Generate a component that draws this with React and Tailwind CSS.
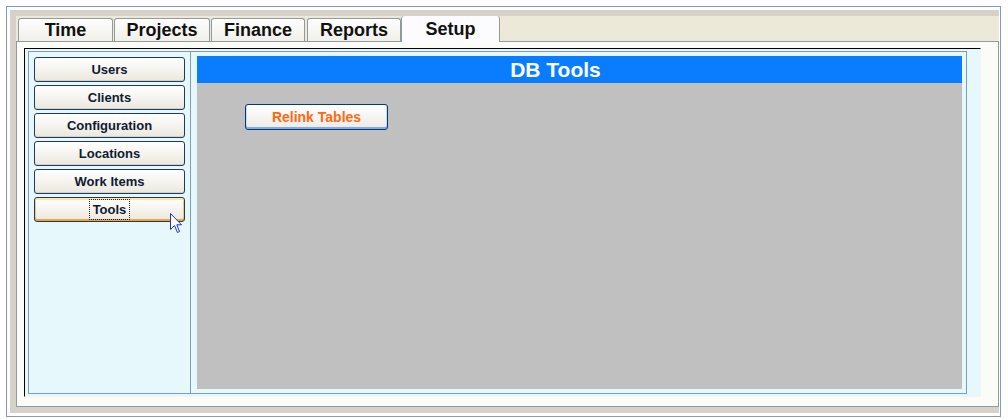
import React from 'react';

const font = { fontFamily: '"Liberation Sans", Arial, sans-serif' };

const tabs = [
  { label: 'Time', width: 'w-[95px]', margin: 'ml-[2px]' },
  { label: 'Projects', width: 'w-[96px]', margin: 'ml-[1px]' },
  { label: 'Finance', width: 'w-[94px]', margin: 'ml-[1px]' },
  { label: 'Reports', width: 'w-[94px]', margin: 'ml-[2px]' },
];

const menu = ['Users', 'Clients', 'Configuration', 'Locations', 'Work Items'];

const Cursor = () => (
  <svg
    className="absolute left-[141px] top-[161px]"
    width="13"
    height="21"
    viewBox="0 0 13 21"
  >
    <path
      d="M0.5 0.5 L0.5 16.5 L4.5 12.5 L7.5 19.5 L9.5 18.5 L6.8 11.8 L11.5 11.8 Z"
      fill="#ffffff"
      stroke="#1c2fd0"
      strokeWidth="1"
    />
  </svg>
);

const SideButton = ({ label }) => (
  <button className="h-[25px] w-[151px] rounded-[3px] border border-[#1b3b6a] bg-gradient-to-b from-[#ffffff] to-[#ebe8dd] text-[13px] font-bold text-[#0f1a33] shadow-[inset_0_-1px_0_#d6d2c4]">
    {label}
  </button>
);

export default function App() {
  return (
    <div className="h-[419px] w-[1008px] bg-white pl-[6px] pt-[6px]" style={font}>
      {/* outer frame */}
      <div className="h-[411px] w-[995px] border border-[#8596c8] pl-[3px] pt-[3px]">
        <div className="h-[403px] w-[989px] bg-[#d6d1c9] pl-[6px] pt-[6px]">
          {/* tab strip */}
          <div className="flex h-[25px] w-[983px] items-end bg-[#ece9d8]">
            {tabs.map((tab) => (
              <div
                key={tab.label}
                className={`${tab.width} ${tab.margin} flex h-[23px] items-center justify-center rounded-t-[3px] border border-b-0 border-[#919b9c] bg-gradient-to-b from-[#fefefe] to-[#f0efe8] text-[18px] font-bold text-[#111]`}
              >
                {tab.label}
              </div>
            ))}
            <div className="relative z-10 mb-[-1px] flex h-[26px] w-[99px] flex-col rounded-t-[3px] border-x border-[#919b9c] bg-[#fcfcfe]">
              <div className="h-[1px] bg-[#e68b2c]" />
              <div className="h-[2px] bg-[#ffc83c]" />
              <div className="flex flex-1 items-center justify-center pb-[3px] text-[18px] font-bold text-[#111]">
                Setup
              </div>
            </div>
          </div>

          {/* tab panel */}
          <div className="h-[366px] w-[983px] border border-[#919b9c] bg-[#fbfbf8] pl-[7px] pt-[6px]">
            <div className="h-[349px] w-[957px] border border-l-black border-t-black border-b-[#f3f3ef] border-r-[#f3f3ef] bg-[#e6f8fc] pl-[3px] pt-[2px]">
              <div className="flex h-[343px] w-[939px] border border-[#7f9db9]">
                {/* sidebar */}
                <div className="relative flex w-[162px] flex-col gap-[3px] border-r border-[#7f9db9] pl-[5px] pt-[5px]">
                  {menu.map((m) => (
                    <SideButton key={m} label={m} />
                  ))}
                  <button className="h-[25px] w-[151px] rounded-[3px] border border-[#1b3b6a] bg-gradient-to-b from-[#ffffff] to-[#ebe8dd] text-[13px] font-bold text-[#0f1a33] shadow-[inset_0_-2px_0_#eda536,inset_0_2px_0_#ffe7a8,inset_1px_0_0_#f7c86a,inset_-1px_0_0_#f7c86a]">
                    <span className="px-[3px] py-[2px] outline-1 outline-dotted outline-[#222]">
                      Tools
                    </span>
                  </button>
                  <Cursor />
                </div>

                {/* main area */}
                <div className="flex flex-1 flex-col pb-[4px] pl-[6px] pr-[4px] pt-[4px]">
                  <div className="flex h-[27px] items-center justify-center bg-[#0a7dff] pr-[48px] text-[21px] font-bold text-white">
                    DB Tools
                  </div>
                  <div className="flex-1 bg-[#c0c0c0] pl-[48px] pt-[21px]">
                    <button className="h-[26px] w-[143px] rounded-[3px] border border-[#003c74] bg-gradient-to-b from-[#ffffff] to-[#ecebe6] text-[14px] font-bold text-[#ff6a10] shadow-[inset_0_-2px_0_#86a8e4,inset_1px_0_0_#c7d9f6,inset_-1px_0_0_#c7d9f6]">
                      Relink Tables
                    </button>
                  </div>
                </div>
              </div>
            </div>
          </div>
        </div>
      </div>
    </div>
  );
}
